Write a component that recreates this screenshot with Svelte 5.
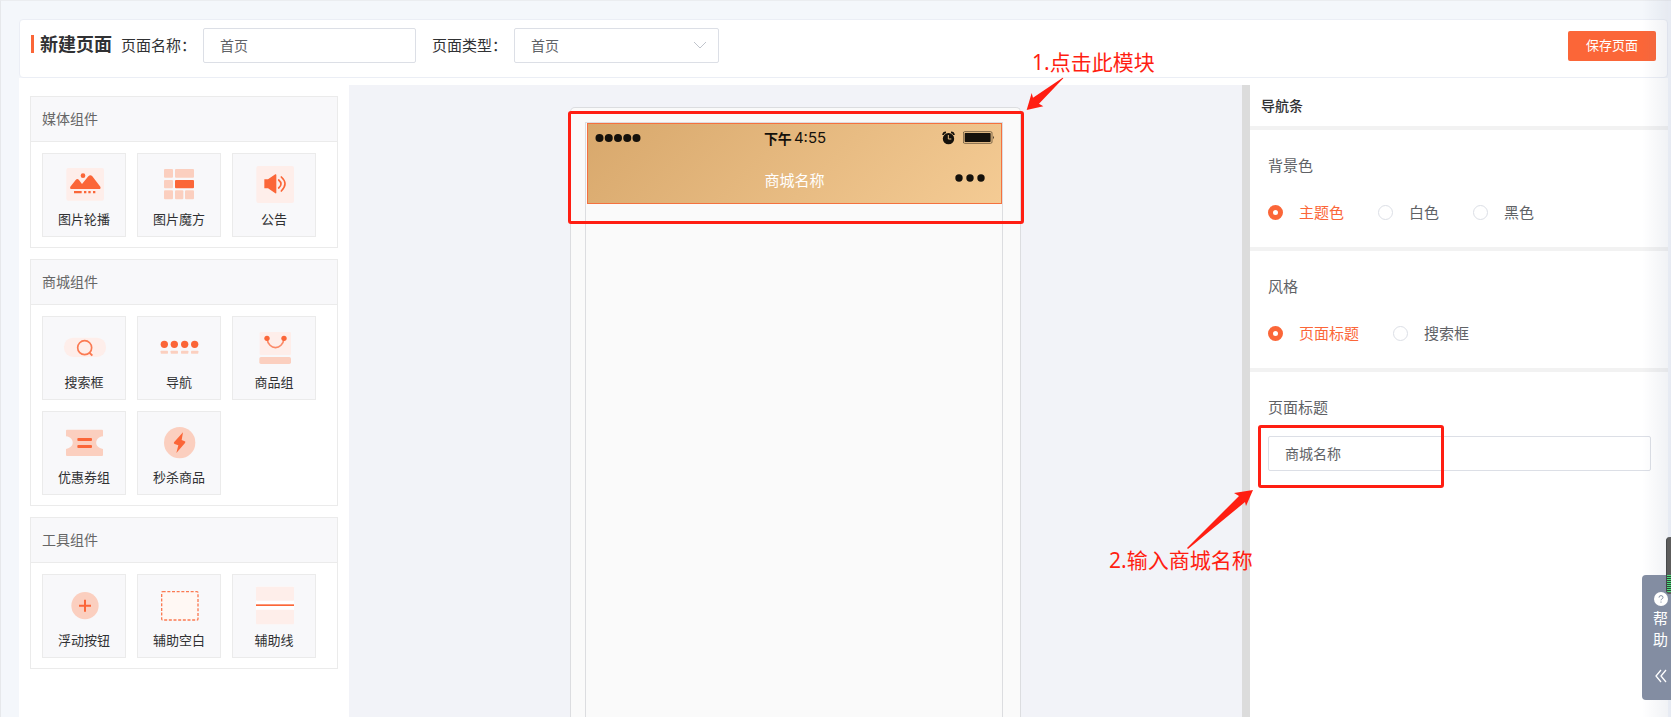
<script>
	const groups = [
		{
			title: '媒体组件',
			items: [
				{ icon: 'banner', label: '图片轮播' },
				{ icon: 'cube', label: '图片魔方' },
				{ icon: 'notice', label: '公告' }
			]
		},
		{
			title: '商城组件',
			items: [
				{ icon: 'search', label: '搜索框' },
				{ icon: 'nav', label: '导航' },
				{ icon: 'goods', label: '商品组' },
				{ icon: 'coupon', label: '优惠券组' },
				{ icon: 'flash', label: '秒杀商品' }
			]
		},
		{
			title: '工具组件',
			items: [
				{ icon: 'float', label: '浮动按钮' },
				{ icon: 'blank', label: '辅助空白' },
				{ icon: 'line', label: '辅助线' }
			]
		}
	];

	const colors = ['主题色', '白色', '黑色'];
	const modes = ['页面标题', '搜索框'];

	let pageName = $state('首页');
	let pageType = $state('首页');
	let color = $state('主题色');
	let mode = $state('页面标题');
	let shopTitle = $state('商城名称');
</script>

<svelte:head><title>新建页面</title></svelte:head>

{#snippet icon(name)}
	<svg class="icon" viewBox="0 0 132 132" fill="#fb6638" aria-hidden="true">
		{#if name === 'banner'}
			<rect x="13" y="9" width="113" height="98" rx="6" fill="#feeeea" />
			<circle cx="63" cy="32" r="7" />
			<path d="M27 72q-5-2-2-7l16-20q5-6 10 0l9 12 19-23q6-7 12 0l24 31q3 5-2 7z" />
			<path d="M36 78h23v7H36zM66 78h7v7h-7zM79 78h7v7h-7zM93 78h7v7h-7z" />
		{:else if name === 'cube'}
			<g fill="#fbcfbf">
				<rect x="21" y="12" width="27" height="26" rx="3" />
				<rect x="54" y="12" width="57" height="26" rx="3" />
				<rect x="21" y="45" width="27" height="25" rx="3" />
				<rect x="21" y="76" width="27" height="27" rx="3" />
				<rect x="54" y="76" width="25" height="27" rx="3" />
				<rect x="84" y="76" width="27" height="27" rx="3" />
			</g>
			<rect x="54" y="45" width="57" height="25" rx="3" />
		{:else if name === 'notice'}
			<rect x="13" y="3" width="113" height="111" rx="6" fill="#feeeea" />
			<path d="M37 43h11l22-15q3-1 3 2v53q0 3-3 2L48 70H37z" />
			<path d="M80 45q14 12 0 24M88 36q22 20 0 42" fill="none" stroke="#fb6638" stroke-width="5" stroke-linecap="round" />
		{:else if name === 'search'}
			<rect x="6" y="29" width="126" height="58" rx="27" fill="#feeeea" />
			<circle cx="68" cy="59" r="21" fill="none" stroke="#fb7a52" stroke-width="5" />
			<path d="M82 74l9 9" stroke="#fb7a52" stroke-width="6" />
		{:else if name === 'nav'}
			{#each [22, 52, 83, 113] as cx}
				<circle {cx} cy="49" r="11" />
				<rect x={cx - 11} y="68" width="22" height="9" rx="2" fill="#fbcfbf" />
			{/each}
		{:else if name === 'goods'}
			<rect x="23" y="12" width="94" height="69" rx="4" fill="#feeeea" />
			<rect x="22" y="87" width="95" height="21" rx="5" fill="#fbcfbf" />
			<path d="M45 31c4 37 47 37 51 0" fill="none" stroke="#fb8a68" stroke-width="5" />
			<circle cx="45" cy="31" r="8" />
			<circle cx="96" cy="31" r="8" />
		{:else if name === 'coupon'}
			<path d="M15 20h105q3 0 3 3v17c-27 4-27 34 0 38v18q0 3-3 3H15q-3 0-3-3V78c27-4 27-34 0-38V23q0-3 3-3z" fill="#fbcfbf" />
			<rect x="46" y="45" width="44" height="9" rx="3" />
			<rect x="46" y="66" width="44" height="9" rx="3" />
		{:else if name === 'flash'}
			<circle cx="68" cy="59" r="47" fill="#fbcfbf" />
			<path d="M78 28L51 58q-2 4 2 5l11 4-6 23 26-30q3-4-1-5l-9-4z" />
		{:else if name === 'float'}
			<circle cx="69" cy="59" r="41" fill="#fbcfbf" />
			<path d="M51 59h36M69 41v36" stroke="#fb6638" stroke-width="6" />
		{:else if name === 'blank'}
			<rect x="14" y="17" width="109" height="85" rx="3" fill="#fff8f4" stroke="#fb7a52" stroke-width="4" stroke-dasharray="9 5" />
		{:else if name === 'line'}
			<rect x="12" y="2" width="114" height="112" fill="#fff" />
			<rect x="12" y="2" width="114" height="42" rx="3" fill="#feeeea" />
			<rect x="12" y="71" width="114" height="44" rx="3" fill="#feeeea" />
			<rect x="12" y="55" width="114" height="5" />
		{/if}
	</svg>
{/snippet}

<div class="page">
	<header class="topbar">
		<h1>新建页面</h1>
		<label for="page-name">页面名称：</label>
		<input id="page-name" class="field name" type="text" bind:value={pageName} />
		<label for="page-type" class="type-label">页面类型：</label>
		<div class="select">
			<select id="page-type" class="field" bind:value={pageType}>
				<option>首页</option>
				<option>自定义</option>
			</select>
			<svg viewBox="0 0 14 14" aria-hidden="true"><path d="M1 4l6 6 6-6" /></svg>
		</div>
		<button type="button" class="save">保存页面</button>
	</header>

	<main class="editor">
		<aside class="library">
			{#each groups as group}
				<section class="card">
					<h2>{group.title}</h2>
					<div class="items">
						{#each group.items as item}
							<button type="button" class="item">
								{@render icon(item.icon)}
								<span>{item.label}</span>
							</button>
						{/each}
					</div>
				</section>
			{/each}
		</aside>

		<div class="canvas">
			<div class="phone">
				<div class="screen">
					<div class="nav-wrap">
						<div class="navbar">
							<div class="status">
								<svg class="signal" viewBox="0 0 46 10" aria-hidden="true">
									{#each [0, 1, 2, 3, 4] as n}
										<circle cx={4.5 + n * 9.25} cy="5" r="4" />
									{/each}
								</svg>
								<div class="clock"><b>下午</b><span>4:55</span></div>
								<div class="power">
									<svg width="13" height="14" viewBox="0 0 39 42" aria-hidden="true">
										<circle cx="19.5" cy="23" r="17" />
										<path d="M3 12Q4 4 12 4M36 12Q35 4 27 4" fill="none" stroke="#15110b" stroke-width="5" />
										<path d="M19 12v12h9" fill="none" stroke="#e9be84" stroke-width="3" />
									</svg>
									<svg width="32" height="13" viewBox="0 0 96 39" aria-hidden="true">
										<rect x="1" y="2" width="86" height="35" rx="4" fill="none" stroke="#7d6748" stroke-width="3" />
										<rect x="5" y="6" width="78" height="27" rx="2" />
										<path d="M90 14q5 5 0 11z" />
									</svg>
								</div>
							</div>
							<div class="caption">
								<span>{shopTitle}</span>
								<svg class="more" viewBox="0 0 30 8" aria-hidden="true">
									<circle cx="4" cy="4" r="3.7" />
									<circle cx="15" cy="4" r="3.7" />
									<circle cx="26" cy="4" r="3.7" />
								</svg>
							</div>
						</div>
						<div class="mark mark-nav"></div>
						<svg class="arrow arrow-nav" viewBox="0 0 114 102" aria-hidden="true">
							<path d="M2 99L17 48l4 14L110 2l2 2-73 76 13 8z" />
						</svg>
						<p class="tip tip-nav">1.点击此模块</p>
					</div>
				</div>
			</div>
		</div>

		<aside class="settings">
			<h2>导航条</h2>
			<fieldset>
				<legend>背景色</legend>
				<div class="options">
					{#each colors as c}
						<label><input type="radio" name="color" value={c} bind:group={color} /><span>{c}</span></label>
					{/each}
				</div>
			</fieldset>
			<fieldset>
				<legend>风格</legend>
				<div class="options">
					{#each modes as m}
						<label><input type="radio" name="mode" value={m} bind:group={mode} /><span>{m}</span></label>
					{/each}
				</div>
			</fieldset>
			<div class="group">
				<label class="group-label" for="shop-title">页面标题</label>
				<div class="title-wrap">
					<input id="shop-title" class="field" type="text" bind:value={shopTitle} />
					<div class="mark mark-title"></div>
					<svg class="arrow arrow-title" viewBox="0 0 66 60" aria-hidden="true">
						<path d="M66 0L47 3l5 3L0 58l1 1 57-47 1 4z" />
					</svg>
					<p class="tip tip-title">2.输入商城名称</p>
				</div>
			</div>
		</aside>
	</main>
</div>

<div class="edge"></div>
<button type="button" class="help">
	<svg width="14" height="14" viewBox="0 0 14 14" aria-hidden="true">
		<circle cx="7" cy="7" r="7" fill="#fff" />
		<path d="M5 5.6q0-2 2-2t2 1.800q0 1-1 1.500t-1 1.400M7 9.500v1.200" fill="none" stroke="#838da2" />
	</svg>
	<span>帮</span>
	<span>助</span>
	<svg class="chevrons" width="12" height="14" viewBox="0 0 12 14" aria-hidden="true">
		<path d="M6 1L1 7l5 6M11 1L6 7l5 6" fill="none" stroke="#fff" stroke-width="1.300" />
	</svg>
</button>
<div class="monitor"></div>

<style>
	:global(body) {
		background: #f4f7fb;
		font-family: "Noto Sans", "Noto Sans CJK SC", sans-serif;
		color: #303133;
		overflow-x: hidden;
	}
	.page {
		min-height: 100vh;
		box-sizing: border-box;
		display: flex;
		flex-direction: column;
		padding: 18px 3px 0 18px;
		border-top: 1px solid #ebedf0;
		border-left: 1px solid #e6e8eb;
	}
	h1, h2, p { margin: 0; }
	button, input, select { font-family: inherit; }

	.topbar {
		display: flex;
		align-items: center;
		padding: 8px 11px 14px;
		border: 1px solid #ebeef5;
		border-radius: 4px;
		background: #fff;
		font-size: 15px;
	}
	.topbar label { padding-bottom: 2px; }
	h1 {
		display: flex;
		align-items: center;
		gap: 6px;
		margin-right: 9px;
		padding-bottom: 4px;
		font-size: 18px;
		line-height: 30px;
	}
	h1::before { content: ''; width: 3px; height: 18px; background: #fb6638; }
	.field {
		box-sizing: border-box;
		width: 100%;
		height: 35px;
		padding: 0 16px 1px;
		border: 1px solid #dcdfe6;
		border-radius: 2px;
		background: #fff;
		color: #606266;
		font-size: 14px;
		outline: none;
	}
	.field:focus { border-color: #fb6638; }
	.name { width: 213px; margin-left: 7px; }
	.type-label { margin-left: 16px; }
	.select { display: grid; align-items: center; width: 205px; margin-left: 7px; }
	.select > * { grid-area: 1 / 1; }
	.select select { appearance: none; }
	.select svg {
		width: 14px; height: 14px; justify-self: end; margin: 0 12px 2px 0;
		fill: none; stroke: #c0c4cc; pointer-events: none;
	}
	.save {
		margin-left: auto;
		width: 88px;
		height: 30px;
		padding: 0 0 2px;
		border: none;
		border-radius: 2px;
		background: #fb6638;
		color: #fff;
		font-size: 13px;
		cursor: pointer;
	}

	.editor { flex: 1; display: flex; padding-top: 7px; background: #fff; }
	.library {
		box-sizing: border-box;
		width: 330px;
		flex: none;
		display: flex;
		flex-direction: column;
		gap: 11px;
		padding: 11px;
	}
	.card { border: 1px solid #ebebeb; }
	.card h2 {
		padding: 0 11px;
		line-height: 44px;
		border-bottom: 1px solid #ebebeb;
		background: #f8f8fa;
		color: #666;
		font-size: 14px;
		font-weight: 400;
	}
	.items { display: flex; flex-wrap: wrap; gap: 11px; padding: 11px 11px 10px; }
	.item {
		box-sizing: border-box;
		width: 84px;
		height: 84px;
		display: flex;
		flex-direction: column;
		align-items: center;
		padding: 11px 0 0;
		border: 1px solid #ebebeb;
		background: #f8f8fa;
		color: #303133;
		font-size: 13px;
		line-height: 21px;
		cursor: move;
	}
	.icon { width: 44px; height: 44px; flex: none; }

	.canvas { flex: 1; display: flex; justify-content: center; padding-top: 22px; background: #f2f3f8; }
	.phone {
		box-sizing: border-box;
		width: 451px;
		display: flex;
		padding: 14px 17px 0 14px;
		border: 1px solid #dcdde0;
		border-bottom: none;
		border-radius: 5px 5px 0 0;
		background: #fafafa;
	}
	.screen { flex: 1; padding: 0 0 0 1px; border: 1px solid #dcdde0; border-bottom: none; }
	.nav-wrap { position: relative; }
	.navbar {
		box-sizing: border-box;
		height: 81px;
		border: 1px solid #f5713f;
		background: linear-gradient(135deg, #d8a86c, #f4cb94);
		color: #15110b;
		fill: #15110b;
	}
	.status {
		display: grid;
		grid-template-columns: 1fr auto 1fr;
		align-items: center;
		padding: 0 6px 0 7px;
		height: 27px;
	}
	.signal { width: 46px; height: 10px; }
	.clock { display: flex; align-items: center; gap: 2px; font-size: 15px; }
	.clock b { font-size: 14px; }
	.clock span { font-family: Inter, sans-serif; }
	.power { display: flex; align-items: center; justify-content: flex-end; gap: 8px; }
	.caption {
		display: grid;
		grid-template-columns: 1fr auto 1fr;
		align-items: center;
		padding: 7px 16px 0;
		color: #fff;
		font-size: 15px;
		line-height: 44px;
	}
	.caption span { grid-column: 2; }
	.caption .more { width: 30px; height: 8px; justify-self: end; margin-bottom: 4px; }

	.settings { width: 418px; flex: none; border-left: 8px solid #dcdcdc; }
	.settings h2 {
		padding: 0 11px;
		font-size: 14px;
		font-weight: 500;
		line-height: 41px;
		border-bottom: 4px solid #f2f2f2;
	}
	fieldset, .group {
		min-width: 0;
		margin: 0;
		padding: 17px 17px 17px 18px;
		border: none;
		color: #606266;
		font-size: 15px;
		line-height: 36px;
	}
	fieldset { border-bottom: 4px solid #f2f2f2; }
	legend { float: left; width: 100%; padding: 0; }
	.options { display: flex; gap: 34px; padding-top: 11px; clear: both; }
	.options label { display: flex; align-items: center; gap: 16px; cursor: pointer; }
	.options input {
		appearance: none;
		box-sizing: border-box;
		width: 15px;
		height: 15px;
		margin: 0;
		border: 1px solid #dcdfe6;
		border-radius: 50%;
		background: #fff;
	}
	.options input:checked { border: 5px solid #fb6638; }
	.options input:checked + span { color: #fb6638; }
	.group-label { display: block; margin-bottom: 11px; }
	.title-wrap { position: relative; display: flex; }

	/* guide marks drawn over the editor */
	.mark {
		position: absolute;
		box-sizing: border-box;
		border: 3px solid #ff1e12;
		border-radius: 3px;
		pointer-events: none;
	}
	.mark-nav { inset: -12px -22px -20px -19px; }
	.mark-title { left: -10px; top: -11px; width: 186px; height: 63px; }
	.arrow { position: absolute; fill: #ff1e12; pointer-events: none; }
	.arrow-nav { left: 439px; top: -46px; width: 38px; height: 34px; }
	.arrow-title { left: -81px; top: 54px; width: 66px; height: 60px; }
	.tip {
		position: absolute;
		color: #ff1e12;
		font-size: 21px;
		line-height: 30px;
		white-space: nowrap;
		pointer-events: none;
	}
	.tip-nav { left: 445px; top: -76px; }
	.tip-title { left: -159px; top: 109px; }

	.edge {
		position: fixed;
		top: 0;
		right: 0;
		bottom: 0;
		width: 30px;
		border-right: 3px solid rgba(120, 135, 175, 0.1);
		box-sizing: border-box;
		background: linear-gradient(to right, rgba(120, 135, 165, 0), rgba(120, 135, 165, 0.1));
		pointer-events: none;
	}
	.help {
		position: fixed;
		right: 0;
		top: 575px;
		box-sizing: border-box;
		width: 29px;
		height: 125px;
		display: flex;
		flex-direction: column;
		align-items: center;
		padding: 17px 0 0 8px;
		border: none;
		border-radius: 4px 0 0 4px;
		background: #838da2;
		color: #fff;
		font-size: 15px;
		line-height: 21px;
		cursor: pointer;
	}
	.help span:first-of-type { margin-top: 2px; }
	.chevrons { margin-top: 19px; }
	.monitor {
		position: fixed;
		right: 0;
		top: 537px;
		box-sizing: border-box;
		width: 5px;
		height: 57px;
		border-left: 1px solid #45484a;
		border-radius: 4px 0 0 4px;
		background:
			repeating-linear-gradient(#4be07c 0 1px, #33453a 1px 2px) 0 38px / 5px 17px no-repeat,
			#5c5c5c;
	}
</style>
